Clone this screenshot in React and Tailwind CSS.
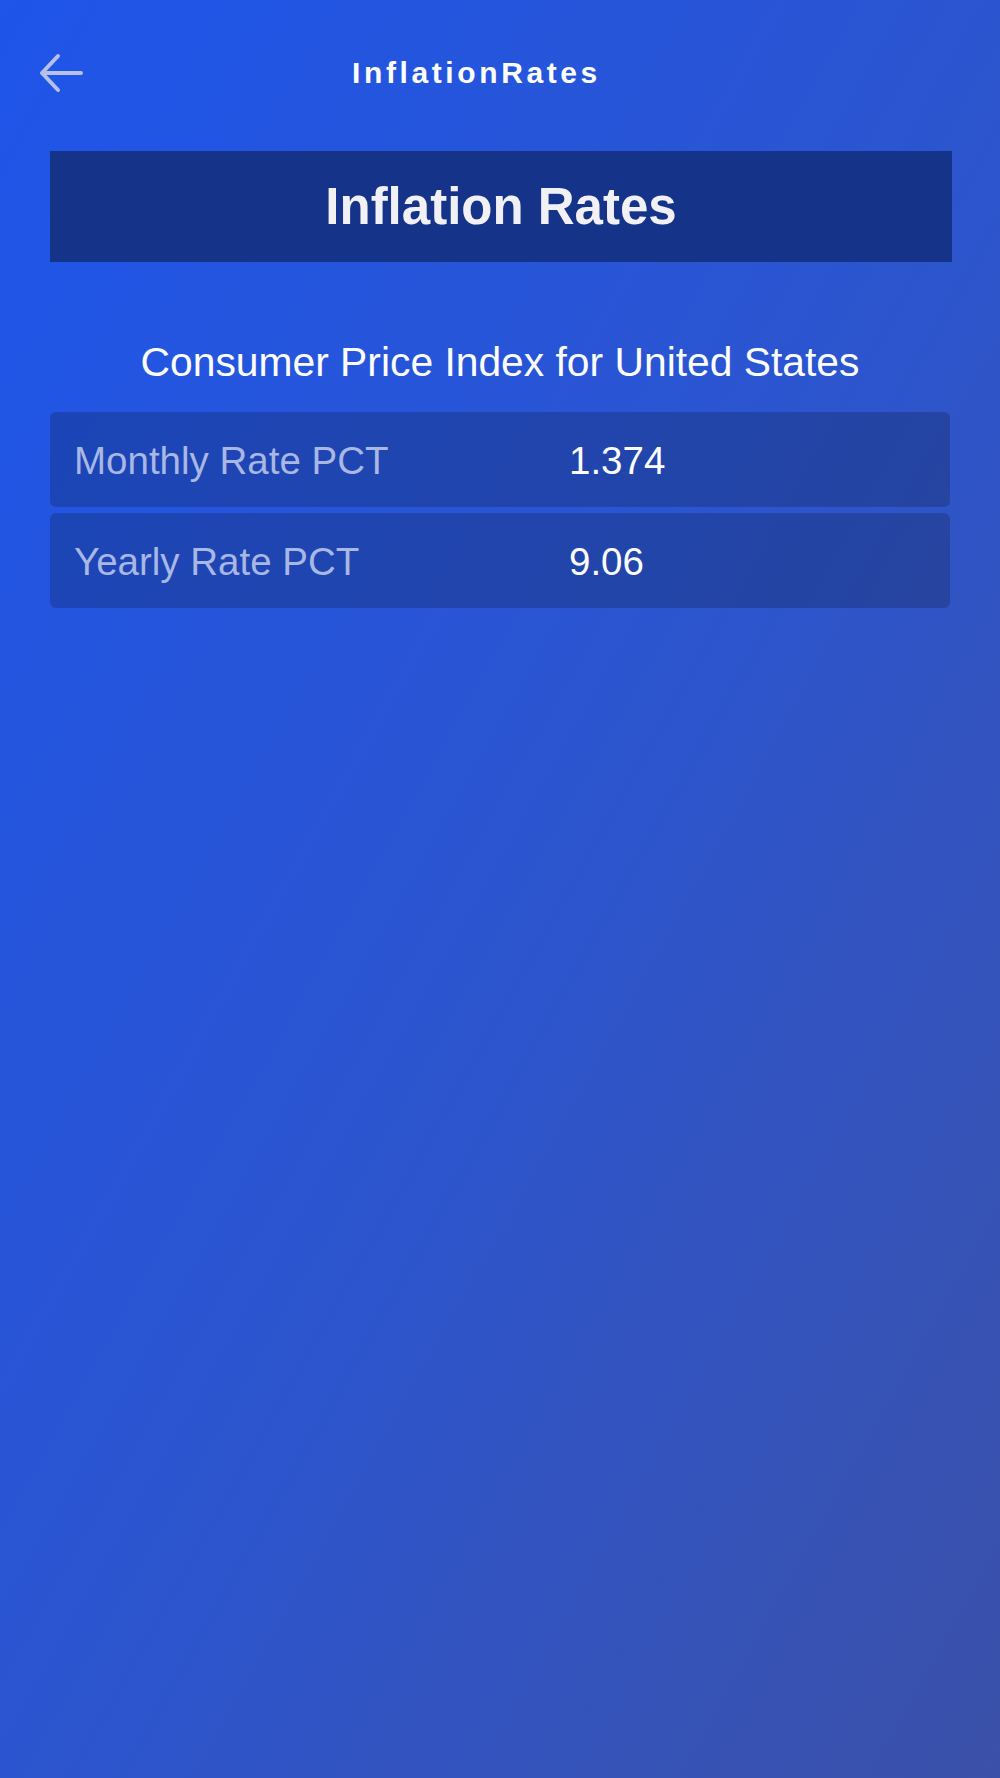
import React from "react";

function BackArrow() {
  return (
    <svg width="46" height="42" viewBox="0 0 46 42" fill="none">
      <path
        d="M4 21 H43 M4 21 L20 4 M4 21 L20 38"
        stroke="rgba(210,212,230,0.85)"
        strokeWidth="4"
        strokeLinecap="round"
        strokeLinejoin="round"
      />
    </svg>
  );
}

function Row({ label, value }) {
  return (
    <div className="grid h-[95px] grid-cols-[495px_1fr] items-center rounded-[6px] bg-black/[0.19] pl-6 pt-1">
      <span className="text-[38.5px] leading-none text-[#a8b7e4]">{label}</span>
      <span className="text-[38.5px] leading-none text-white">{value}</span>
    </div>
  );
}

export default function App() {
  return (
    <div
      className="min-h-[1778px] w-full bg-linear-to-br from-[#1e55ea] via-[#2b55d0] to-[#3b51a9]"
      style={{ fontFamily: '"Liberation Sans", Arial, Helvetica, sans-serif' }}
    >
      <div className="flex h-[146px] items-center">
        <div className="flex w-[100px] items-center pl-[38px]">
          <BackArrow />
        </div>
        <div className="flex-1 text-center text-[30px] font-bold leading-none tracking-[3.6px] text-white">
          InflationRates
        </div>
        <div className="w-[147px]" />
      </div>

      <div className="ml-[50px] mt-[5px] flex h-[111px] w-[902px] items-center justify-center bg-[#16338a]">
        <span className="text-[51px] font-bold leading-none text-[#f1f1f5]">Inflation Rates</span>
      </div>

      <div className="mt-[80px] text-center text-[40.8px] leading-none text-white">
        Consumer Price Index for United States
      </div>

      <div className="mx-[50px] mt-[29px] flex flex-col gap-[6px]">
        <Row label="Monthly Rate PCT" value="1.374" />
        <Row label="Yearly Rate PCT" value="9.06" />
      </div>
    </div>
  );
}
